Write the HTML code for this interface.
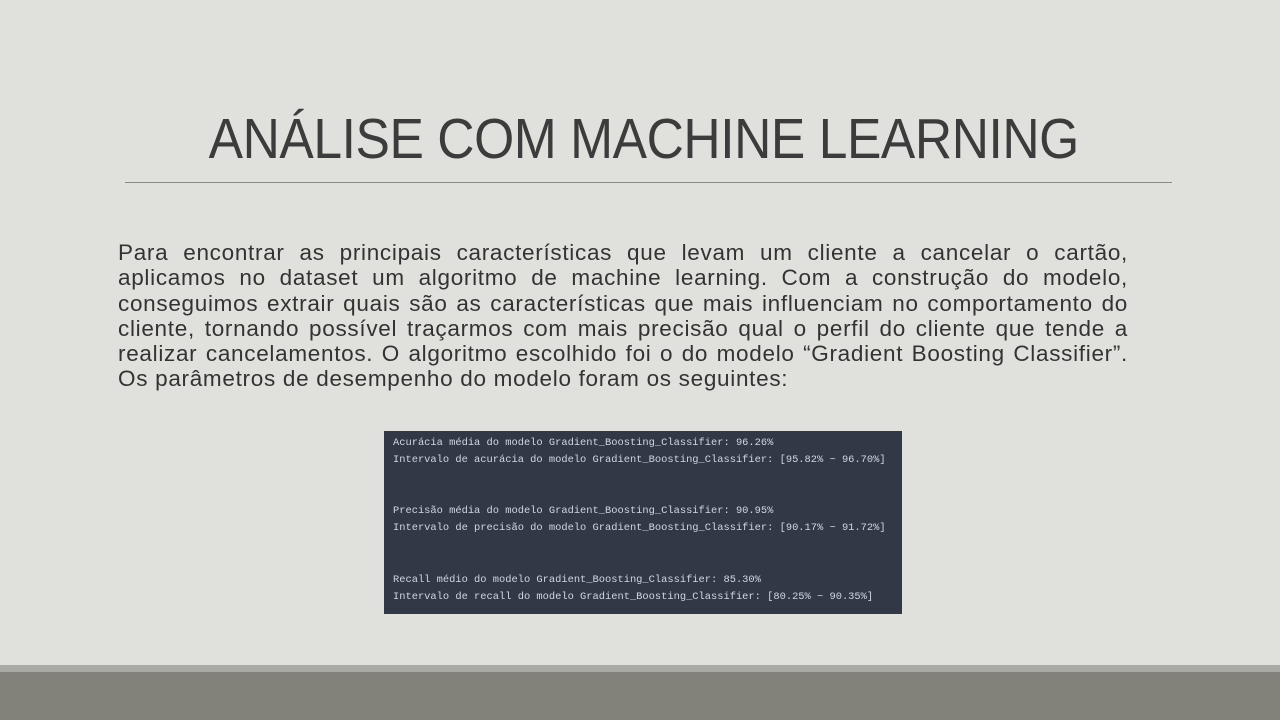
<!DOCTYPE html>
<html><head><meta charset="utf-8"><style>
html,body{margin:0;padding:0;}
body{width:1280px;height:720px;background:#e0e1dc;position:relative;overflow:hidden;font-family:"Liberation Sans",sans-serif;}
.title{position:absolute;left:4px;width:1280px;top:104px;text-align:center;font-size:57px;color:#3c3c3c;line-height:70px;white-space:nowrap;}
.title span{display:inline-block;transform:scaleX(0.905);transform-origin:center;letter-spacing:-0.5px;}
.rule{position:absolute;left:125px;top:182px;width:1047px;height:1px;background:#8a8a86;}
.body{position:absolute;left:118px;top:240px;width:1010px;font-size:22.5px;letter-spacing:0.7px;line-height:25.3px;color:#333;}
.body div{text-align:justify;text-align-last:justify;white-space:nowrap;}
.body div.last{text-align-last:left;}
.code{position:absolute;left:384px;top:431px;width:518px;height:183px;background:#323946;}
.code div{position:absolute;left:9px;font-family:"Liberation Mono",monospace;font-size:10.4px;color:#cfd6e4;white-space:nowrap;}
.b1{position:absolute;left:0;top:665px;width:1280px;height:7px;background:#a9aaa5;}
.b2{position:absolute;left:0;top:672px;width:1280px;height:48px;background:#82827a;}
</style></head><body>
<div class="title"><span>ANÁLISE COM MACHINE LEARNING</span></div>
<div class="rule"></div>
<div class="body">
<div>Para encontrar as principais características que levam um cliente a cancelar o cartão,</div>
<div>aplicamos no dataset um algoritmo de machine learning. Com a construção do modelo,</div>
<div>conseguimos extrair quais são as características que mais influenciam no comportamento do</div>
<div>cliente, tornando possível traçarmos com mais precisão qual o perfil do cliente que tende a</div>
<div>realizar cancelamentos. O algoritmo escolhido foi o do modelo “Gradient Boosting Classifier”.</div>
<div class="last">Os parâmetros de desempenho do modelo foram os seguintes:</div>
</div>
<div class="code">
<div style="top:6px">Acurácia média do modelo Gradient_Boosting_Classifier: 96.26%</div>
<div style="top:23px">Intervalo de acurácia do modelo Gradient_Boosting_Classifier: [95.82% ~ 96.70%]</div>
<div style="top:74px">Precisão média do modelo Gradient_Boosting_Classifier: 90.95%</div>
<div style="top:91px">Intervalo de precisão do modelo Gradient_Boosting_Classifier: [90.17% ~ 91.72%]</div>
<div style="top:143px">Recall médio do modelo Gradient_Boosting_Classifier: 85.30%</div>
<div style="top:160px">Intervalo de recall do modelo Gradient_Boosting_Classifier: [80.25% ~ 90.35%]</div>
</div>
<div class="b1"></div><div class="b2"></div>
</body></html>
